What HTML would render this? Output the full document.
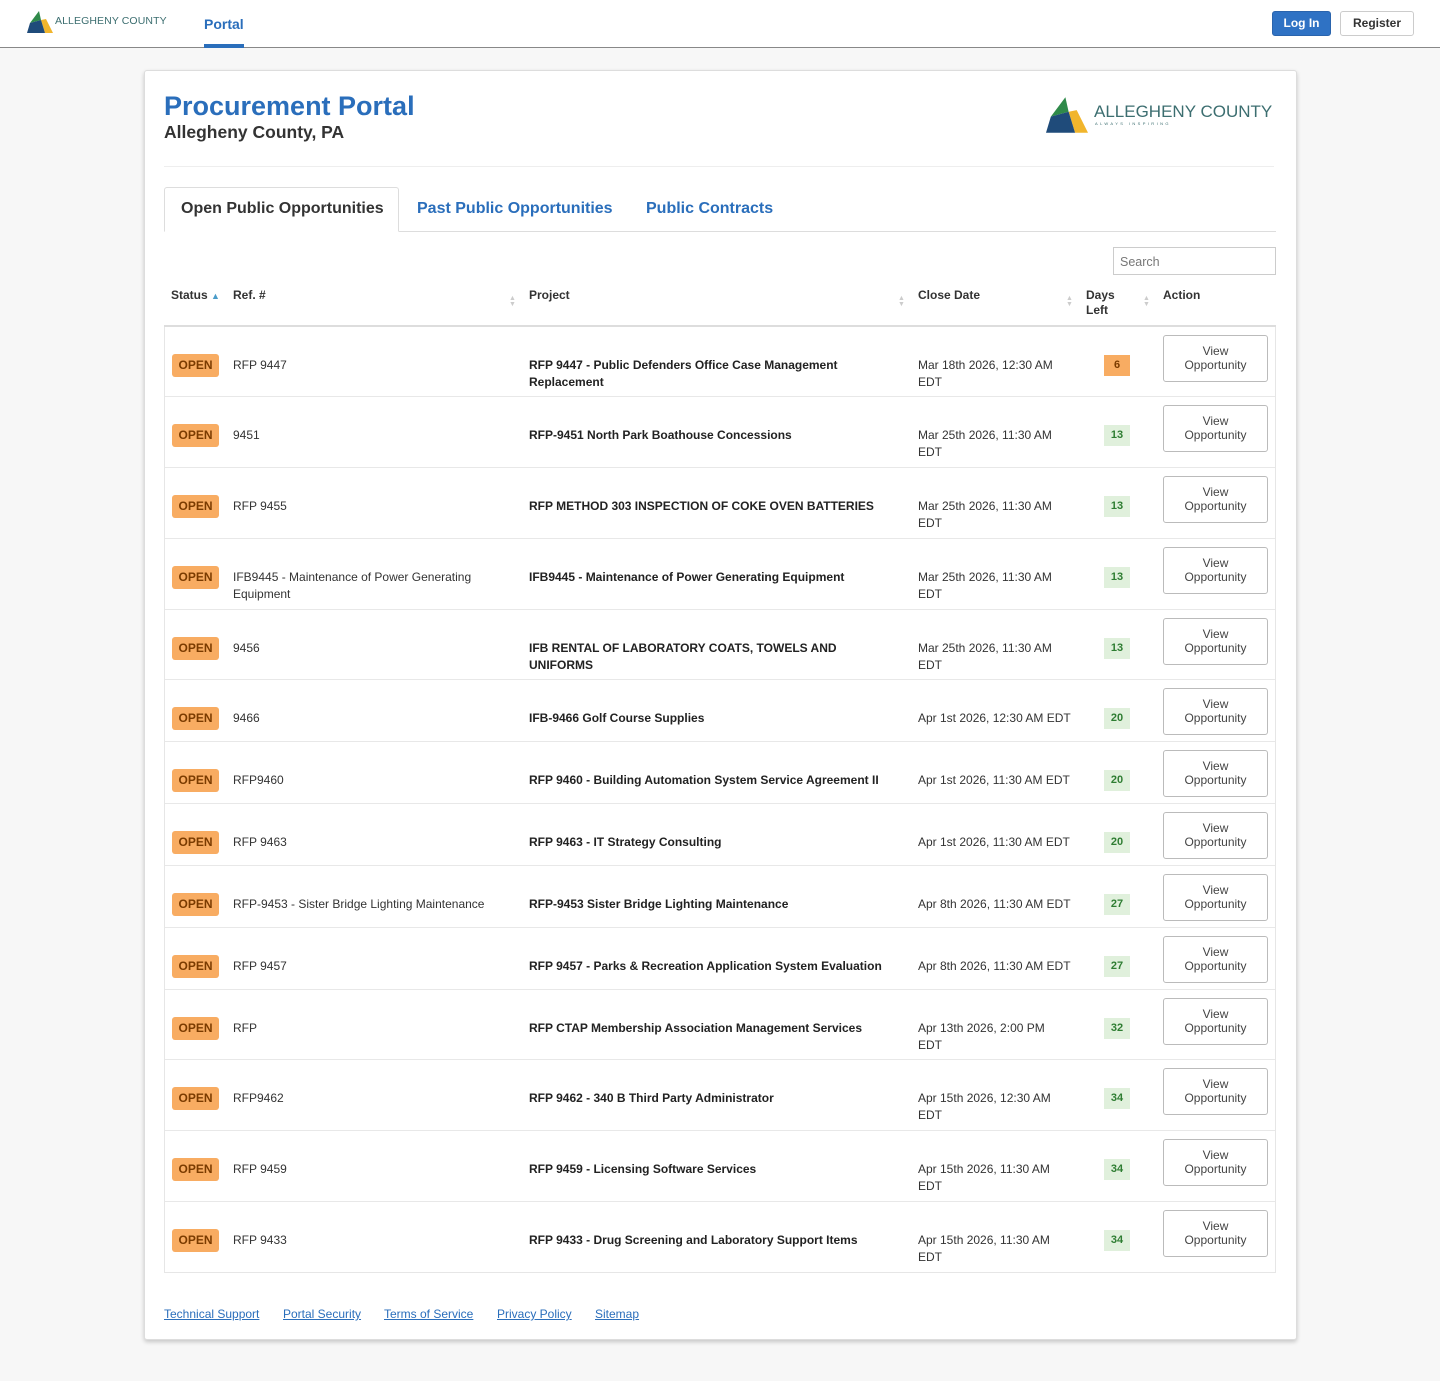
<!DOCTYPE html>
<html><head><meta charset="utf-8"><style>
*{box-sizing:border-box;margin:0;padding:0}
body{width:1440px;height:1381px;background:#f7f7f7;font-family:"Liberation Sans",Arial,sans-serif;color:#333;position:relative;overflow:hidden}
.top{position:absolute;left:0;top:0;width:1440px;height:48px;background:#fff;border-bottom:1px solid #888}
.logo-s{position:absolute;left:27px;top:11px}
.logo-s span{position:absolute;left:28px;top:4px;font-size:10.5px;color:#3c6e70;white-space:nowrap;letter-spacing:.1px}
.portal{position:absolute;left:204px;top:16px;font-size:14px;font-weight:bold;color:#2a6ebb}
.portal-u{position:absolute;left:204px;top:44px;width:40px;height:4px;background:#2a6ebb}
.btn{position:absolute;top:11px;height:25px;font-size:12px;font-weight:bold;border-radius:3px;line-height:23px;text-align:center}
.card{position:absolute;left:144px;top:70px;width:1153px;height:1270px;background:#fff;border:1px solid #ddd;border-radius:3px;box-shadow:0 2px 4px rgba(0,0,0,.2)}
h1{position:absolute;left:164px;top:91px;font-size:27px;color:#2a6ebb;font-weight:bold}
h2{position:absolute;left:164px;top:122px;font-size:17.5px;color:#333;font-weight:bold}
.logo-b{position:absolute;left:1046px;top:96px}
.logo-b .t1{position:absolute;left:48px;top:6px;font-size:17px;color:#3c6e70;white-space:nowrap}
.logo-b .t2{position:absolute;left:49px;top:25px;font-size:4px;letter-spacing:2.4px;color:#3c6e70;white-space:nowrap}
.hr{position:absolute;left:164px;top:166px;width:1110px;height:1px;background:#eee}
.tabline{position:absolute;left:164px;top:231px;width:1112px;height:1px;background:#ddd}
.tab1{position:absolute;left:164px;top:187px;width:235px;height:45px;border:1px solid #ddd;border-bottom:1px solid #fff;border-radius:3px 3px 0 0;background:#fff;font-size:16px;font-weight:bold;color:#333;padding:12px 0 0 16px}
.tab{position:absolute;top:200px;font-size:16px;font-weight:bold;color:#2a6ebb}
.search{position:absolute;left:1113px;top:247px;width:163px;height:28px;border:1px solid #ccc;font-size:12.5px;color:#777;padding:7px 6px}
.th{position:absolute;font-size:12px;font-weight:bold;color:#333;line-height:15px}
.sort{position:absolute;font-size:7px;color:#ccc;line-height:6px}
.thline{position:absolute;left:164px;top:325px;width:1112px;height:2px;background:#ddd}
.tbody{position:absolute;left:164px;top:327px;width:1112px;border:1px solid #e6e6e6;border-top:none}
.row{position:relative;border-bottom:1px solid #e8e8e8;font-size:12px;line-height:16.5px}
.row:last-child{border-bottom:none}
.row>div{position:absolute;top:30px}
.open{left:7px!important;top:27px!important;width:47px;height:23px;background:#f8ac62;border-radius:3px;color:#7a3b00;font-weight:bold;font-size:12px;line-height:23px;text-align:center}
.ref{left:68px;width:270px}
.prj{left:364px;width:360px;font-weight:bold;color:#222}
.dt{left:753px;width:156px}
.dl{left:939px!important;top:28px!important;width:26px;height:21px;background:#e0f0dc;color:#2e7d32;font-weight:bold;text-align:center;line-height:21px;font-size:11px}
.dl.o{background:#f8ac62;color:#7a3b00}
.act{left:998px!important;top:8px!important;width:105px;height:47px;border:1px solid #bbb;border-radius:3px;text-align:center;padding-top:8px;line-height:14px;color:#444}
.foot{position:absolute;top:1307px;font-size:12px;color:#2a6ebb;text-decoration:underline}
</style></head><body>
<div class="top">
 <div class="logo-s"><svg width="26" height="22" viewBox="0 0 26 22"><polygon points="12,0 3,12 14,9" fill="#2f8a4a"/><polygon points="14,9 19,8 26,22 18,22" fill="#f1b52c"/><polygon points="3,12 14,9 18,22 0,22" fill="#1f4b7a"/></svg><span>ALLEGHENY COUNTY</span></div>
 <div class="portal">Portal</div><div class="portal-u"></div>
 <div class="btn" style="left:1272px;width:59px;background:#2f72c4;color:#fff;border:1px solid #2a64ad">Log In</div>
 <div class="btn" style="left:1340px;width:74px;background:#fff;color:#333;border:1px solid #ccc">Register</div>
</div>
<div class="card"></div>
<h1>Procurement Portal</h1>
<h2>Allegheny County, PA</h2>
<div class="logo-b"><svg width="42" height="38" viewBox="0 0 26 22"><polygon points="12,0 3,12 14,9" fill="#2f8a4a"/><polygon points="14,9 19,8 26,22 18,22" fill="#f1b52c"/><polygon points="3,12 14,9 18,22 0,22" fill="#1f4b7a"/></svg><span class="t1">ALLEGHENY COUNTY</span><span class="t2">ALWAYS INSPIRING</span></div>
<div class="hr"></div>
<div class="tabline"></div>
<div class="tab1">Open Public Opportunities</div>
<div class="tab" style="left:417px">Past Public Opportunities</div>
<div class="tab" style="left:646px">Public Contracts</div>
<div class="search">Search</div>
<div class="th" style="left:171px;top:288px">Status <span style="color:#4a9cc9;font-size:9px">▲</span></div>
<div class="th" style="left:233px;top:288px">Ref. #</div>
<div class="sort" style="left:509px;top:296px">▲<br>▼</div>
<div class="th" style="left:529px;top:288px">Project</div>
<div class="sort" style="left:898px;top:296px">▲<br>▼</div>
<div class="th" style="left:918px;top:288px">Close Date</div>
<div class="sort" style="left:1066px;top:296px">▲<br>▼</div>
<div class="th" style="left:1086px;top:288px">Days<br>Left</div>
<div class="sort" style="left:1143px;top:296px">▲<br>▼</div>
<div class="th" style="left:1163px;top:288px">Action</div>
<div class="thline"></div>
<div class="tbody">
<div class="row" style="height:70px"><div class="open">OPEN</div><div class="ref">RFP 9447</div><div class="prj">RFP 9447 - Public Defenders Office Case Management Replacement</div><div class="dt">Mar 18th 2026, 12:30 AM EDT</div><div class="dl o">6</div><div class="act">View<br>Opportunity</div></div>
<div class="row" style="height:71px"><div class="open">OPEN</div><div class="ref">9451</div><div class="prj">RFP-9451 North Park Boathouse Concessions</div><div class="dt">Mar 25th 2026, 11:30 AM EDT</div><div class="dl">13</div><div class="act">View<br>Opportunity</div></div>
<div class="row" style="height:71px"><div class="open">OPEN</div><div class="ref">RFP 9455</div><div class="prj">RFP METHOD 303 INSPECTION OF COKE OVEN BATTERIES</div><div class="dt">Mar 25th 2026, 11:30 AM EDT</div><div class="dl">13</div><div class="act">View<br>Opportunity</div></div>
<div class="row" style="height:71px"><div class="open">OPEN</div><div class="ref">IFB9445 - Maintenance of Power Generating Equipment</div><div class="prj">IFB9445 - Maintenance of Power Generating Equipment</div><div class="dt">Mar 25th 2026, 11:30 AM EDT</div><div class="dl">13</div><div class="act">View<br>Opportunity</div></div>
<div class="row" style="height:70px"><div class="open">OPEN</div><div class="ref">9456</div><div class="prj">IFB RENTAL OF LABORATORY COATS, TOWELS AND UNIFORMS</div><div class="dt">Mar 25th 2026, 11:30 AM EDT</div><div class="dl">13</div><div class="act">View<br>Opportunity</div></div>
<div class="row" style="height:62px"><div class="open">OPEN</div><div class="ref">9466</div><div class="prj">IFB-9466 Golf Course Supplies</div><div class="dt">Apr 1st 2026, 12:30 AM EDT</div><div class="dl">20</div><div class="act">View<br>Opportunity</div></div>
<div class="row" style="height:62px"><div class="open">OPEN</div><div class="ref">RFP9460</div><div class="prj">RFP 9460 - Building Automation System Service Agreement II</div><div class="dt">Apr 1st 2026, 11:30 AM EDT</div><div class="dl">20</div><div class="act">View<br>Opportunity</div></div>
<div class="row" style="height:62px"><div class="open">OPEN</div><div class="ref">RFP 9463</div><div class="prj">RFP 9463 - IT Strategy Consulting</div><div class="dt">Apr 1st 2026, 11:30 AM EDT</div><div class="dl">20</div><div class="act">View<br>Opportunity</div></div>
<div class="row" style="height:62px"><div class="open">OPEN</div><div class="ref">RFP-9453 - Sister Bridge Lighting Maintenance</div><div class="prj">RFP-9453 Sister Bridge Lighting Maintenance</div><div class="dt">Apr 8th 2026, 11:30 AM EDT</div><div class="dl">27</div><div class="act">View<br>Opportunity</div></div>
<div class="row" style="height:62px"><div class="open">OPEN</div><div class="ref">RFP 9457</div><div class="prj">RFP 9457 - Parks &amp; Recreation Application System Evaluation</div><div class="dt">Apr 8th 2026, 11:30 AM EDT</div><div class="dl">27</div><div class="act">View<br>Opportunity</div></div>
<div class="row" style="height:70px"><div class="open">OPEN</div><div class="ref">RFP</div><div class="prj">RFP CTAP Membership Association Management Services</div><div class="dt" style="width:140px">Apr 13th 2026, 2:00 PM EDT</div><div class="dl">32</div><div class="act">View<br>Opportunity</div></div>
<div class="row" style="height:71px"><div class="open">OPEN</div><div class="ref">RFP9462</div><div class="prj">RFP 9462 - 340 B Third Party Administrator</div><div class="dt">Apr 15th 2026, 12:30 AM EDT</div><div class="dl">34</div><div class="act">View<br>Opportunity</div></div>
<div class="row" style="height:71px"><div class="open">OPEN</div><div class="ref">RFP 9459</div><div class="prj">RFP 9459 - Licensing Software Services</div><div class="dt">Apr 15th 2026, 11:30 AM EDT</div><div class="dl">34</div><div class="act">View<br>Opportunity</div></div>
<div class="row" style="height:70px"><div class="open">OPEN</div><div class="ref">RFP 9433</div><div class="prj">RFP 9433 - Drug Screening and Laboratory Support Items</div><div class="dt">Apr 15th 2026, 11:30 AM EDT</div><div class="dl">34</div><div class="act">View<br>Opportunity</div></div>
</div>
<div class="foot" style="left:164px">Technical Support</div>
<div class="foot" style="left:283px">Portal Security</div>
<div class="foot" style="left:384px">Terms of Service</div>
<div class="foot" style="left:497px">Privacy Policy</div>
<div class="foot" style="left:595px">Sitemap</div>
</body></html>
